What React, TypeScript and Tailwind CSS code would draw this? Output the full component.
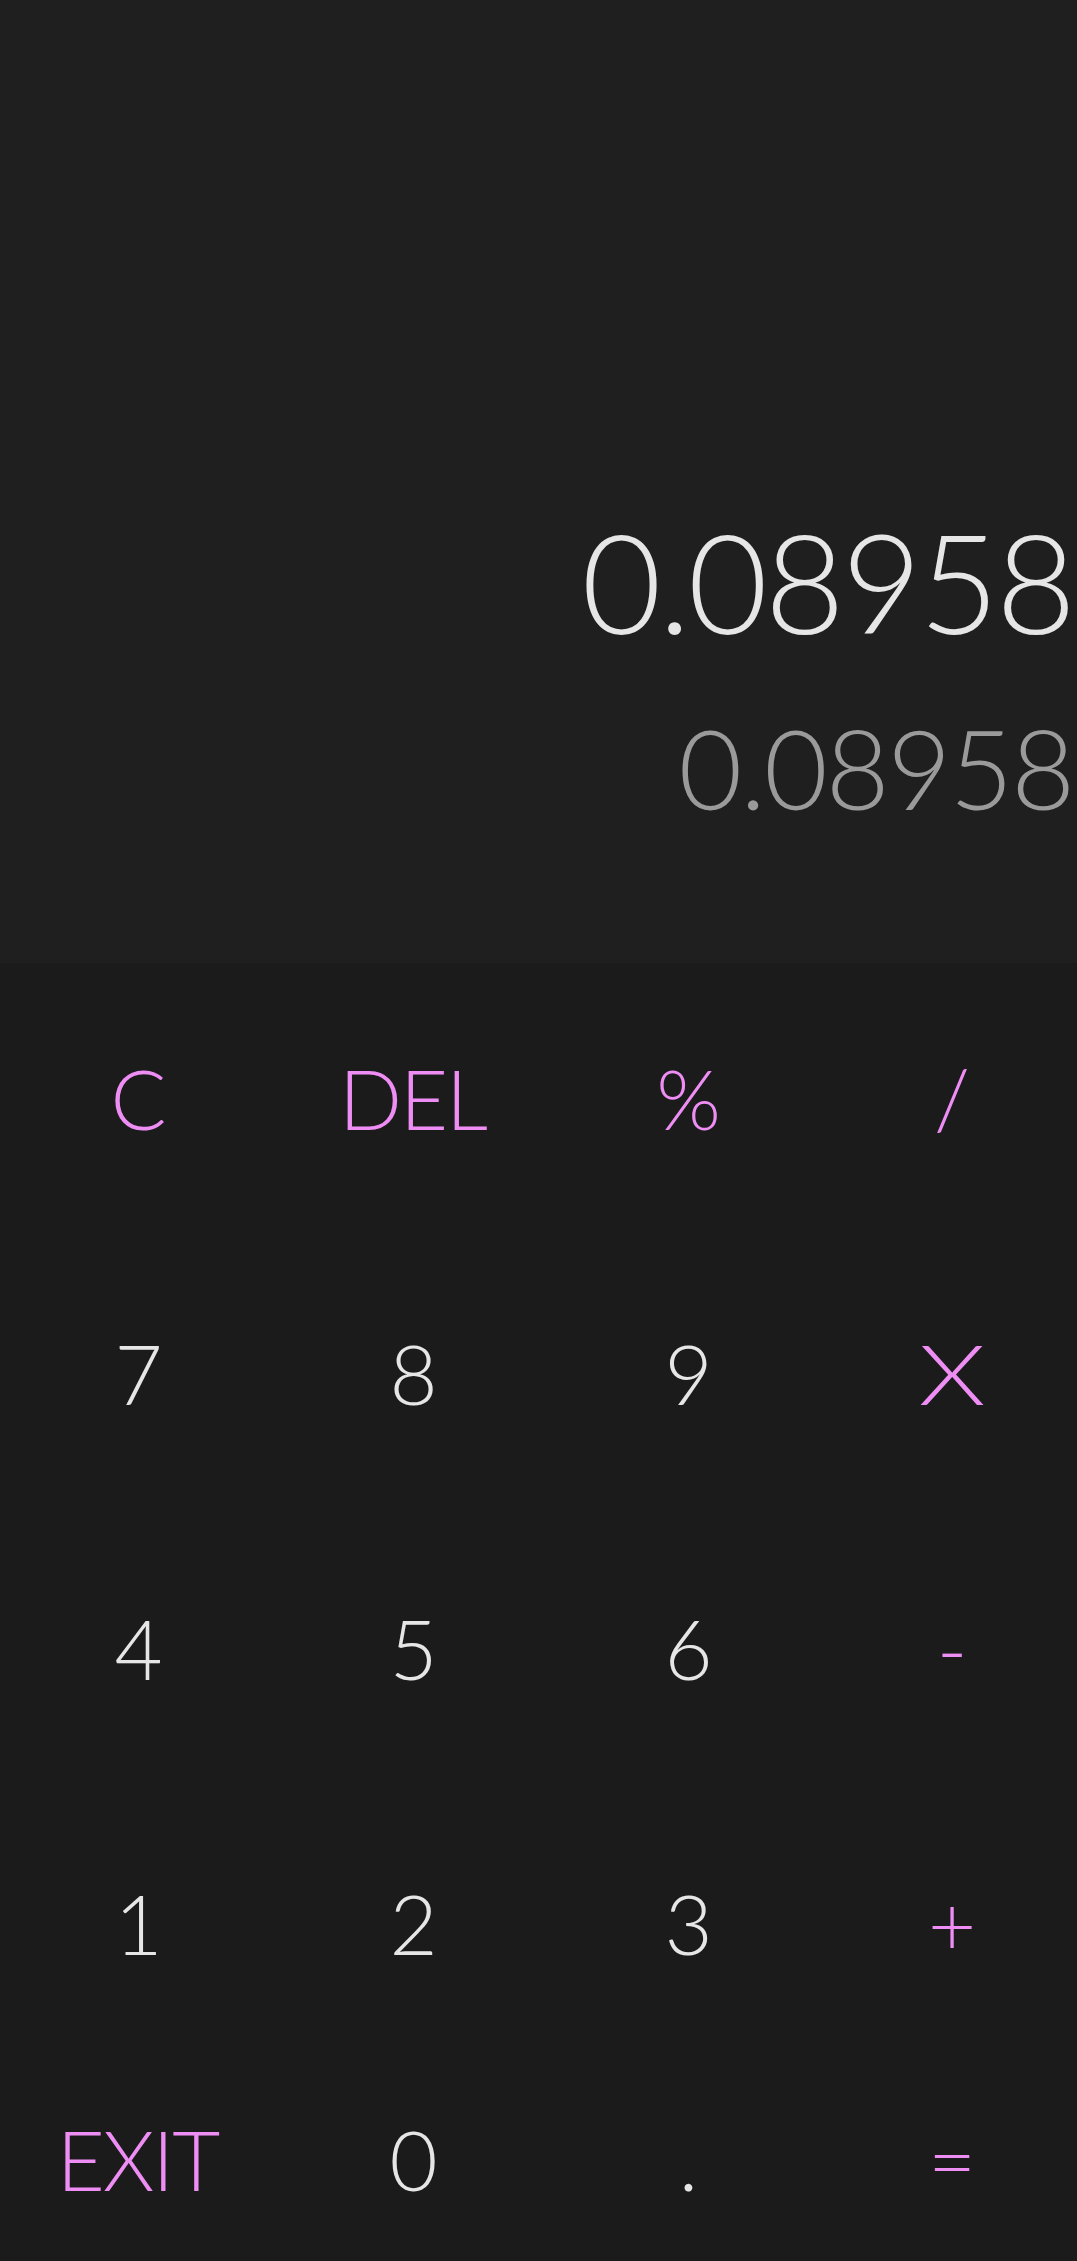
import React from "react";

type Key = { label: string; accent?: boolean; wide?: boolean };

const keys: Key[] = [
  { label: "C", accent: true },
  { label: "DEL", accent: true },
  { label: "%", accent: true },
  { label: "/", accent: true },
  { label: "7" },
  { label: "8" },
  { label: "9" },
  { label: "X", accent: true, wide: true },
  { label: "4" },
  { label: "5" },
  { label: "6" },
  { label: "-", accent: true },
  { label: "1" },
  { label: "2" },
  { label: "3" },
  { label: "+", accent: true },
  { label: "EXIT", accent: true },
  { label: "0" },
  { label: "." },
  { label: "=", accent: true },
];

function Display({ value, result }: { value: string; result: string }) {
  return (
    <div className="flex h-[963px] flex-col items-end justify-end gap-[62px] bg-[#1f1f1f] pb-[141px] pr-[4px]">
      <div className="text-[138px] font-light leading-none tracking-[-3px] text-[#e6e6e6]">{value}</div>
      <div className="text-[110px] font-light leading-none tracking-[-2px] text-[#9a9a9a]">{result}</div>
    </div>
  );
}

function Keypad() {
  return (
    <div className="grid flex-1 grid-cols-[275px_275px_275px_1fr] grid-rows-[275px_275px_275px_275px_1fr] bg-[#1b1b1b]">
      {keys.map((k) => (
        <button
          key={k.label}
          className={
            "flex items-center justify-center pb-[5px] text-[83px] font-light leading-none tracking-[-2px] " +
            (k.accent ? "text-[#ee8ef4]" : "text-[#e6e6e6]")
          }
        >
          {k.wide ? <span className="inline-block scale-x-[1.3]">{k.label}</span> : k.label}
        </button>
      ))}
    </div>
  );
}

export default function App() {
  return (
    <div
      className="flex h-[2261px] w-full flex-col overflow-hidden bg-[#1b1b1b]"
      style={{ fontFamily: "Lato, 'Noto Sans', sans-serif" }}
    >
      <Display value="0.08958" result="0.08958" />
      <Keypad />
    </div>
  );
}
